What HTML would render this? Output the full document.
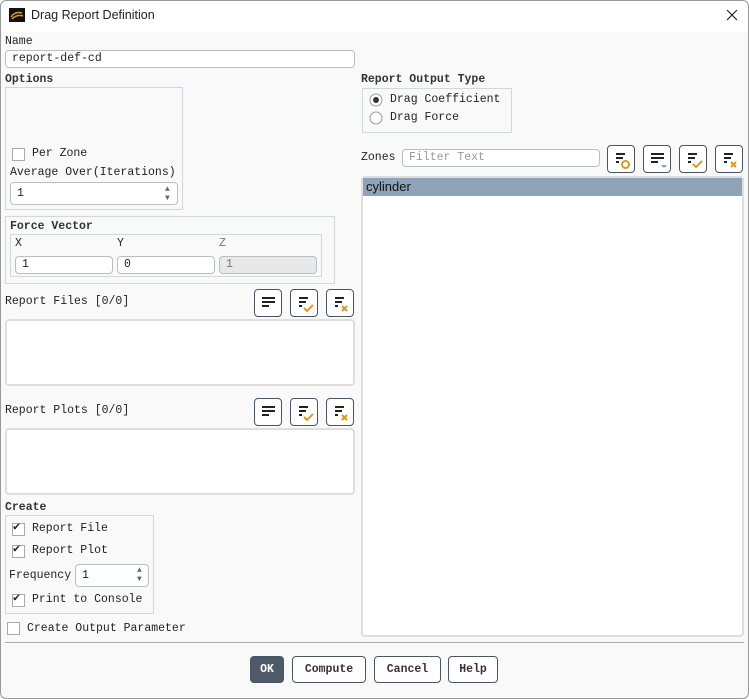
<!DOCTYPE html>
<html><head><meta charset="utf-8"><style>
*{box-sizing:border-box;margin:0;padding:0}
body{width:749px;height:699px;overflow:hidden;background:#fff;font-family:"Liberation Mono","Noto Sans CJK SC",monospace;font-size:11.5px;color:#222;position:relative}
.win{position:absolute;left:0;top:0;width:749px;height:699px;border-radius:6px;background:#f9f9f9;overflow:hidden}
.frame{position:absolute;left:0;top:0;width:749px;height:699px;border:1px solid #999;border-radius:6px;pointer-events:none}
.title{position:absolute;left:0;top:0;width:749px;height:32px;background:#fff}
.a{position:absolute}
.b{font-weight:bold;color:#333}
.inp{position:absolute;background:#fff;border:1px solid #b9bec6;border-radius:4px;padding-left:6px;line-height:16px}
.grp{position:absolute;border:1px solid #d2d6de}
.btn{position:absolute;width:28px;height:28px;border:1px solid #4a5563;border-radius:4px;background:#fff}
.btn svg{position:absolute;left:0;top:0}
.list{position:absolute;background:#fff;border:2px solid #dedede;border-radius:4px}
.cb{position:absolute;width:13px;height:13px;border:1px solid #aaa;background:#fff}
.pb{position:absolute;height:27px;border:1px solid #4a5563;border-radius:4px;background:#fff;font-weight:bold;text-align:center;line-height:25px;color:#333}
</style></head><body>
<div class="win">
<div class="title"></div>
<svg class="a" style="left:9px;top:8px" width="16" height="14"><rect width="16" height="14" fill="#111"/><path d="M2 9 Q6 3 13 5 M3 11 Q8 6 14 8" stroke="#d99a2b" stroke-width="1.5" fill="none"/></svg>
<div class="a" style="left:31px;top:8px;font-family:'Liberation Sans',sans-serif;font-size:12.5px">Drag Report Definition</div>
<svg class="a" style="left:726px;top:9px" width="12" height="12"><path d="M1 1L11 11M11 1L1 11" stroke="#222" stroke-width="1.2"/></svg>

<div class="a" style="left:5px;top:35px">Name</div>
<div class="inp" style="left:5px;top:50px;width:350px;height:18px">report-def-cd</div>
<div class="a b" style="left:5px;top:73px">Options</div>
<div class="grp" style="left:5px;top:87px;width:178px;height:123px"></div>
<div class="cb" style="left:12px;top:148px"></div>
<div class="a" style="left:32px;top:147px">Per Zone</div>
<div class="a" style="left:10px;top:166px">Average Over(Iterations)</div>
<div class="inp" style="left:10px;top:182px;width:168px;height:23px;line-height:21px">1</div>
<div class="a" style="left:165px;top:185px;font-size:8px;color:#666;line-height:9px">▲<br>▼</div>

<div class="grp" style="left:5px;top:216px;width:330px;height:68px"></div>
<div class="a b" style="left:10px;top:220px">Force Vector</div>
<div class="grp" style="left:10px;top:234px;width:312px;height:43px"></div>
<div class="a" style="left:15px;top:237px">X</div>
<div class="a" style="left:117px;top:237px">Y</div>
<div class="a" style="left:219px;top:237px;color:#777">Z</div>
<div class="inp" style="left:15px;top:256px;width:98px;height:18px">1</div>
<div class="inp" style="left:117px;top:256px;width:98px;height:18px">0</div>
<div class="inp" style="left:219px;top:256px;width:98px;height:18px;background:#e8e8e8;color:#777">1</div>

<div class="a" style="left:5px;top:295px">Report Files [0/0]</div>
<div class="list" style="left:5px;top:319px;width:350px;height:67px"></div>
<div class="a" style="left:5px;top:404px">Report Plots [0/0]</div>
<div class="list" style="left:5px;top:428px;width:350px;height:67px"></div>

<div class="a b" style="left:5px;top:501px">Create</div>
<div class="grp" style="left:5px;top:515px;width:149px;height:99px"></div>
<div class="cb" style="left:12px;top:523px"></div><div class="a" style="left:13px;top:519px;font-size:12px">✔</div>
<div class="a" style="left:32px;top:522px">Report File</div>
<div class="cb" style="left:12px;top:545px"></div><div class="a" style="left:13px;top:541px;font-size:12px">✔</div>
<div class="a" style="left:32px;top:544px">Report Plot</div>
<div class="a" style="left:9px;top:569px">Frequency</div>
<div class="inp" style="left:75px;top:564px;width:74px;height:23px;line-height:21px">1</div>
<div class="a" style="left:137px;top:566px;font-size:8px;color:#666;line-height:9px">▲<br>▼</div>
<div class="cb" style="left:12px;top:594px"></div><div class="a" style="left:13px;top:590px;font-size:12px">✔</div>
<div class="a" style="left:32px;top:593px">Print to Console</div>
<div class="cb" style="left:7px;top:622px"></div>
<div class="a" style="left:27px;top:622px">Create Output Parameter</div>

<div class="a b" style="left:361px;top:73px">Report Output Type</div>
<div class="grp" style="left:362px;top:88px;width:150px;height:45px"></div>
<svg class="a" style="left:369px;top:93px" width="14" height="14"><circle cx="7" cy="7" r="6" fill="#fff" stroke="#999"/><circle cx="7" cy="7" r="3" fill="#333"/></svg>
<div class="a" style="left:390px;top:93px">Drag Coefficient</div>
<svg class="a" style="left:369px;top:111px" width="14" height="14"><circle cx="7" cy="7" r="6" fill="#fff" stroke="#999"/></svg>
<div class="a" style="left:390px;top:111px">Drag Force</div>

<div class="a" style="left:361px;top:151px">Zones</div>
<div class="inp" style="left:402px;top:149px;width:198px;height:18px;color:#999">Filter Text</div>
<div class="list" style="left:361px;top:176px;width:383px;height:461px"></div>
<div class="a" style="left:363px;top:178px;width:379px;height:18px;background:#8ea3b8;font-family:'Liberation Sans',sans-serif;font-size:13px;padding-left:3px;line-height:18px;color:#111">cylinder</div>

<div class="btn" style="left:607px;top:145px"><svg width="28" height="28"><path d="M8 8h9M8 12h7M8 16h3" stroke="#222" stroke-width="2"/><circle cx="17.5" cy="18.5" r="3.5" fill="none" stroke="#d99a1e" stroke-width="2"/></svg></div>
<div class="btn" style="left:643px;top:145px"><svg width="28" height="28"><path d="M7 8h13M7 12h13M7 16h7" stroke="#222" stroke-width="2"/><path d="M17 19h6l-3 3z" fill="#999"/></svg></div>
<div class="btn" style="left:679px;top:145px"><svg width="28" height="28"><path d="M8 8h9M8 12h7M8 16h3" stroke="#222" stroke-width="2"/><path d="M13 18l3 3 6-6" stroke="#d99a1e" stroke-width="2" fill="none"/></svg></div>
<div class="btn" style="left:715px;top:145px"><svg width="28" height="28"><path d="M8 8h9M8 12h7M8 16h3" stroke="#222" stroke-width="2"/><path d="M15 16l5 5M20 16l-5 5" stroke="#d99a1e" stroke-width="2"/></svg></div>

<div class="btn" style="left:254px;top:289px"><svg width="28" height="28"><path d="M7 8h13M7 12h13M7 16h7" stroke="#222" stroke-width="2"/></svg></div>
<div class="btn" style="left:290px;top:289px"><svg width="28" height="28"><path d="M8 8h9M8 12h7M8 16h3" stroke="#222" stroke-width="2"/><path d="M13 18l3 3 6-6" stroke="#d99a1e" stroke-width="2" fill="none"/></svg></div>
<div class="btn" style="left:326px;top:289px"><svg width="28" height="28"><path d="M8 8h9M8 12h7M8 16h3" stroke="#222" stroke-width="2"/><path d="M15 16l5 5M20 16l-5 5" stroke="#d99a1e" stroke-width="2"/></svg></div>
<div class="btn" style="left:254px;top:398px"><svg width="28" height="28"><path d="M7 8h13M7 12h13M7 16h7" stroke="#222" stroke-width="2"/></svg></div>
<div class="btn" style="left:290px;top:398px"><svg width="28" height="28"><path d="M8 8h9M8 12h7M8 16h3" stroke="#222" stroke-width="2"/><path d="M13 18l3 3 6-6" stroke="#d99a1e" stroke-width="2" fill="none"/></svg></div>
<div class="btn" style="left:326px;top:398px"><svg width="28" height="28"><path d="M8 8h9M8 12h7M8 16h3" stroke="#222" stroke-width="2"/><path d="M15 16l5 5M20 16l-5 5" stroke="#d99a1e" stroke-width="2"/></svg></div>

<div class="a" style="left:5px;top:642px;width:739px;height:1px;background:#aaa"></div>
<div class="pb" style="left:250px;top:656px;width:34px;background:#4f5a69;color:#fff">OK</div>
<div class="pb" style="left:292px;top:656px;width:74px">Compute</div>
<div class="pb" style="left:374px;top:656px;width:67px">Cancel</div>
<div class="pb" style="left:448px;top:656px;width:50px">Help</div>
</div>
<div class="frame"></div>
</body></html>
